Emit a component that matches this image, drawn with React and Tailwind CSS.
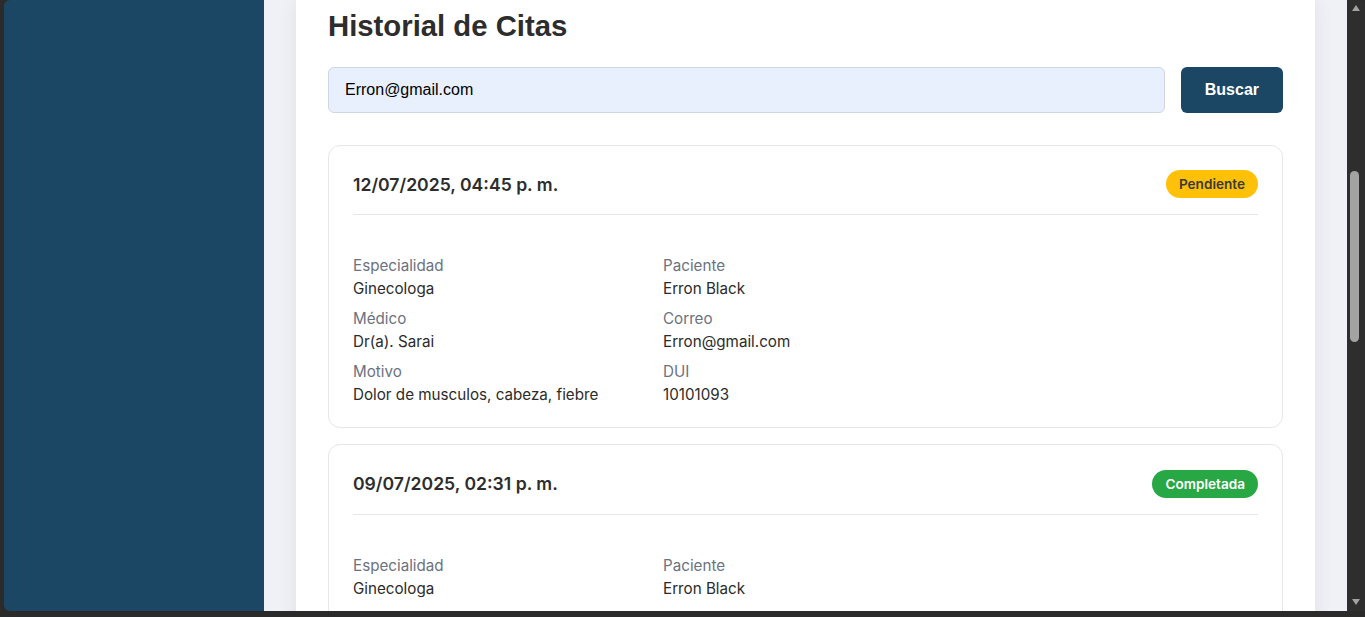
import React from 'react';

const citas = [
  {
    fecha: '12/07/2025, 04:45 p. m.',
    estado: 'Pendiente',
    especialidad: 'Ginecologa',
    medico: 'Dr(a). Sarai',
    motivo: 'Dolor de musculos, cabeza, fiebre',
    paciente: 'Erron Black',
    correo: 'Erron@gmail.com',
    dui: '10101093',
  },
  {
    fecha: '09/07/2025, 02:31 p. m.',
    estado: 'Completada',
    especialidad: 'Ginecologa',
    medico: 'Dr(a). Sarai',
    motivo: 'Control general',
    paciente: 'Erron Black',
    correo: 'Erron@gmail.com',
    dui: '10101093',
  },
];

const Field = ({ label, value }) => (
  <div>
    <p className="text-[15.2px] leading-[23px] text-[#6b7280]">{label}</p>
    <p className="text-[15.2px] leading-[23px] text-[#2b2b2b]">{value}</p>
  </div>
);

const CitaCard = ({ cita }) => {
  const pendiente = cita.estado === 'Pendiente';
  return (
    <div className="rounded-xl border border-[#e5e7eb] bg-white px-6 pt-6 pb-[21px]">
      <div className="flex items-center justify-between border-b border-[#e5e7eb] pb-4">
        <h3 className="mt-[2px] text-[17.6px] font-semibold text-[#2d2d2d]">{cita.fecha}</h3>
        <span
          className={
            pendiente
              ? 'h-7 rounded-full bg-[#ffc107] px-[13px] text-[13.6px] font-semibold leading-7 text-[#3a3a3a]'
              : 'h-7 rounded-full bg-[#28a745] px-[13px] text-[13.6px] font-semibold leading-7 text-white'
          }
        >
          {cita.estado}
        </span>
      </div>
      <div className="grid grid-cols-[310px_310px] gap-y-[7px] pt-[39px]">
        <Field label="Especialidad" value={cita.especialidad} />
        <Field label="Paciente" value={cita.paciente} />
        <Field label="Médico" value={cita.medico} />
        <Field label="Correo" value={cita.correo} />
        <Field label="Motivo" value={cita.motivo} />
        <Field label="DUI" value={cita.dui} />
      </div>
    </div>
  );
};

export default function App() {
  return (
    <div className="flex h-[617px] w-[1365px] overflow-hidden bg-[#2b2b2b] pb-[6px] pl-[4px]">
      <div className="flex flex-1 overflow-hidden rounded-l-[6px]">
        <aside className="w-[260px] shrink-0 bg-[#1c4764]" />
        <main className="flex-1 overflow-hidden bg-[#f0f1f6] px-8">
          <div className="min-h-full bg-white px-8 pt-[6px] pb-8 shadow-[0_0_18px_rgba(0,0,0,0.07)] font-['Inter',sans-serif]">
            <h1 className="font-['Liberation_Sans',Arial,sans-serif] text-[29.3px] font-bold leading-[40px] text-[#2d2d2d]">
              Historial de Citas
            </h1>
            <div className="mt-[21px] flex gap-4">
              <input
                type="text"
                defaultValue="Erron@gmail.com"
                className="h-[46px] flex-1 rounded-md border border-[#cfd6e0] bg-[#e8f0fe] px-4 font-['Liberation_Sans',Arial,sans-serif] text-[16px] text-black outline-none"
              />
              <button className="h-[46px] rounded-md bg-[#1c4764] px-6 font-['Liberation_Sans',Arial,sans-serif] text-[16px] font-bold text-white">
                Buscar
              </button>
            </div>
            <div className="mt-8 flex flex-col gap-4">
              {citas.map((c) => (
                <CitaCard key={c.fecha} cita={c} />
              ))}
            </div>
          </div>
        </main>
      </div>
      <div className="relative w-[18px] shrink-0 rounded-tr-[6px] bg-[#2e2e2e]">
        <div className="absolute left-[5px] top-[5px] h-0 w-0 border-x-[4px] border-b-[6px] border-x-transparent border-b-[#a3a3a3]" />
        <div className="absolute left-[3px] top-[171px] h-[171px] w-[9px] rounded-full bg-[#a3a3a3]" />
        <div className="absolute bottom-[6px] left-[5px] h-0 w-0 border-x-[4px] border-t-[6px] border-x-transparent border-t-[#a3a3a3]" />
      </div>
    </div>
  );
}
